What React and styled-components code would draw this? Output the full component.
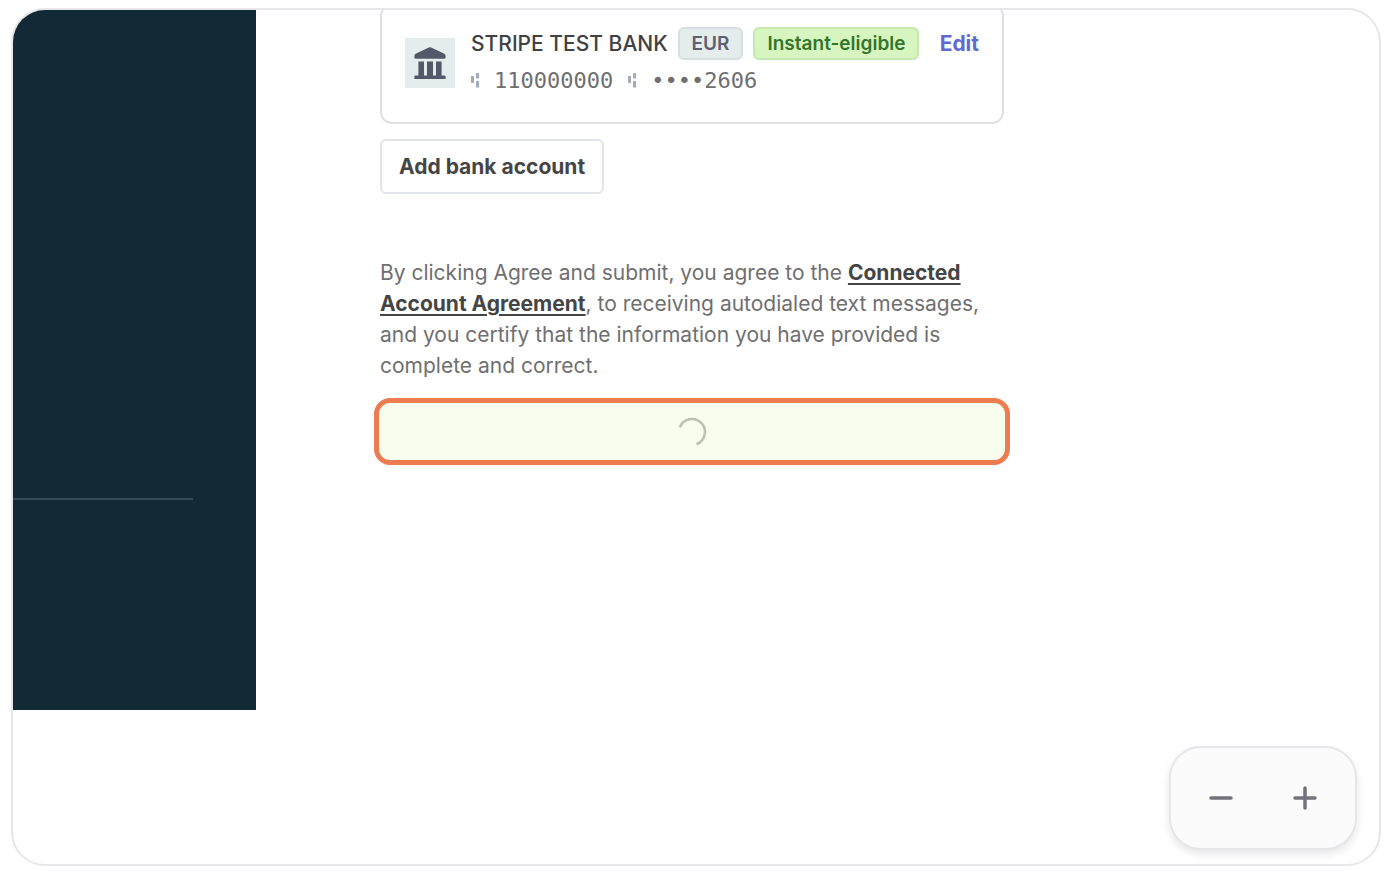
import React from 'react'
import styled, { createGlobalStyle } from 'styled-components'

const GlobalStyle = createGlobalStyle`
  * {
    box-sizing: border-box;
  }
  body {
    margin: 0;
    background: #fff;
    font-family: Inter, "Liberation Sans", sans-serif;
  }
  button {
    font-family: inherit;
    cursor: pointer;
  }
`

const Page = styled.div`
  min-height: 100vh;
  padding: 8px 9px 12px 11px;
  display: flex;
`

const Frame = styled.div`
  flex: 1;
  position: relative;
  border: 2px solid #e6e6eb;
  border-radius: 34px;
  overflow: hidden;
  background: #fff;
`

const Screen = styled.div`
  display: flex;
  align-items: stretch;
`

const Sidebar = styled.aside`
  flex: 0 0 243px;
  min-height: 700px;
  padding-top: 488px;
  background: #122a35;
`

const Divider = styled.hr`
  width: 180px;
  height: 2px;
  margin: 0;
  border: 0;
  background: #334a55;
`

const Main = styled.main`
  flex: 1;
  max-width: 748px;
  padding-left: 124px;
`

const BankCard = styled.section`
  display: flex;
  align-items: flex-start;
  margin-top: -6px;
  padding: 21px 23px 25px;
  border: 2px solid #dfe0e2;
  border-radius: 12px;
`

const BankIcon = styled.div`
  display: flex;
  align-items: center;
  justify-content: center;
  width: 50px;
  height: 50px;
  margin: 11px 16px 0 0;
  background: #e5ecec;
`

const BankDetails = styled.div`
  flex: 1;
`

const BankRow = styled.div`
  display: flex;
  align-items: center;
  gap: 10px;
`

const BankName = styled.span`
  font-size: 21px;
  line-height: 33px;
  font-weight: 500;
  color: #414141;
`

const Badge = styled.span`
  height: 33px;
  padding: 0 12px;
  border: 2px solid ${props => props.$green ? '#c3e9b0' : '#d7dee1'};
  border-radius: 6px;
  background: ${props => props.$green ? '#d6f5bf' : '#e5ecec'};
  color: ${props => props.$green ? '#34752b' : '#5c6070'};
  font-size: 19px;
  line-height: 29px;
  font-weight: 600;
`

const Numbers = styled.div`
  display: flex;
  align-items: center;
  margin-top: 4px;
  font-family: "DejaVu Sans Mono", monospace;
  font-size: 22px;
  line-height: 33px;
  color: #6f6f6f;
  svg {
    margin-right: 14px;
  }
  span + svg {
    margin-left: 15px;
  }
`

const EditButton = styled.button`
  padding: 0;
  border: 0;
  background: none;
  color: #5e6ad2;
  font-size: 21px;
  line-height: 33px;
  font-weight: 700;
`

const AddButton = styled.button`
  height: 55px;
  margin-top: 15px;
  padding: 0 17px;
  border: 2px solid #e1e4ea;
  border-radius: 6px;
  background: #fff;
  color: #454545;
  font-size: 21px;
  font-weight: 700;
`

const Terms = styled.p`
  margin: 63px 0 17px;
  color: #6f6f6f;
  font-size: 21px;
  line-height: 31px;
`

const TermsLink = styled.a`
  color: #454545;
  font-weight: 700;
  text-decoration: underline;
  text-decoration-thickness: 2px;
  text-underline-offset: 3px;
`

const SubmitButton = styled.button`
  display: flex;
  align-items: center;
  justify-content: center;
  width: calc(100% + 12px);
  height: 67px;
  margin: 0 -6px;
  padding: 0;
  border: 5px solid #ed7d50;
  border-radius: 16px;
  background: #f7feed;
`

const ZoomControls = styled.div`
  position: absolute;
  right: 22px;
  bottom: 14px;
  display: flex;
  padding: 8px;
  border: 2px solid #e6e6eb;
  border-radius: 32px;
  background: #fbfbfb;
  box-shadow: 0 4px 8px rgba(0, 0, 0, 0.1);
`

const ZoomButton = styled.button`
  display: flex;
  align-items: center;
  justify-content: center;
  width: 84px;
  height: 84px;
  padding: 0;
  border: 0;
  background: none;
  color: #74727d;
`

function NumberMark() {
  return (
    <svg width="9" height="16" viewBox="0 0 9 16" fill="#a3acbd" aria-hidden="true">
      <rect x="0" y="3" width="3" height="7" />
      <rect x="5" y="0" width="3" height="5.5" />
      <rect x="5" y="8" width="3" height="6.5" />
    </svg>
  )
}

function BankGlyph() {
  return (
    <svg width="32" height="32" viewBox="0 0 32 32" fill="#545969" aria-hidden="true">
      <path d="M14.8 0.6Q16 0 17.2 0.6L30.4 6.8Q31.6 7.6 31.6 9V10.4Q31.6 11.8 30.2 11.8H1.8Q0.4 11.8 0.4 10.4V9Q0.4 7.6 1.6 6.8Z" />
      <path d="M4.4 14.5H10V29H4.4ZM13 14.5H19V29H13ZM22 14.5H27.6V29H22Z" />
      <path d="M1.4 28.4H30.6Q31.6 28.4 31.6 29.4V32H0.4V29.4Q0.4 28.4 1.4 28.4Z" />
    </svg>
  )
}

export default function App() {
  return (
    <Page>
      <GlobalStyle />
      <Frame>
        <Screen>
          <Sidebar>
            <Divider />
          </Sidebar>
          <Main>
            <BankCard>
              <BankIcon>
                <BankGlyph />
              </BankIcon>
              <BankDetails>
                <BankRow>
                  <BankName>STRIPE TEST BANK</BankName>
                  <Badge>EUR</Badge>
                  <Badge $green>Instant-eligible</Badge>
                </BankRow>
                <Numbers>
                  <NumberMark />
                  <span>110000000</span>
                  <NumberMark />
                  <span>••••2606</span>
                </Numbers>
              </BankDetails>
              <EditButton type="button">Edit</EditButton>
            </BankCard>
            <AddButton type="button">Add bank account</AddButton>
            <Terms>
              By clicking Agree and submit, you agree to the{' '}
              <TermsLink href="#agreement">Connected Account Agreement</TermsLink>
              , to receiving autodialed text messages, and you certify that the
              information you have provided is complete and correct.
            </Terms>
            <SubmitButton type="button" aria-label="Agree and submit">
              <svg width="30" height="30" viewBox="0 0 30 30" fill="none" aria-hidden="true">
                <path d="M2.8 10.4A13 13 0 1 1 19.5 27.2" stroke="#bcc2b3" strokeWidth="2.6" />
              </svg>
            </SubmitButton>
          </Main>
        </Screen>
        <ZoomControls>
          <ZoomButton type="button" aria-label="Zoom out">
            <svg width="24" height="24" viewBox="0 0 24 24" stroke="currentColor" strokeWidth="3.5" strokeLinecap="round" aria-hidden="true">
              <path d="M2 12H22" />
            </svg>
          </ZoomButton>
          <ZoomButton type="button" aria-label="Zoom in">
            <svg width="24" height="24" viewBox="0 0 24 24" stroke="currentColor" strokeWidth="3.5" strokeLinecap="round" aria-hidden="true">
              <path d="M2 12H22M12 2V22" />
            </svg>
          </ZoomButton>
        </ZoomControls>
      </Frame>
    </Page>
  )
}
